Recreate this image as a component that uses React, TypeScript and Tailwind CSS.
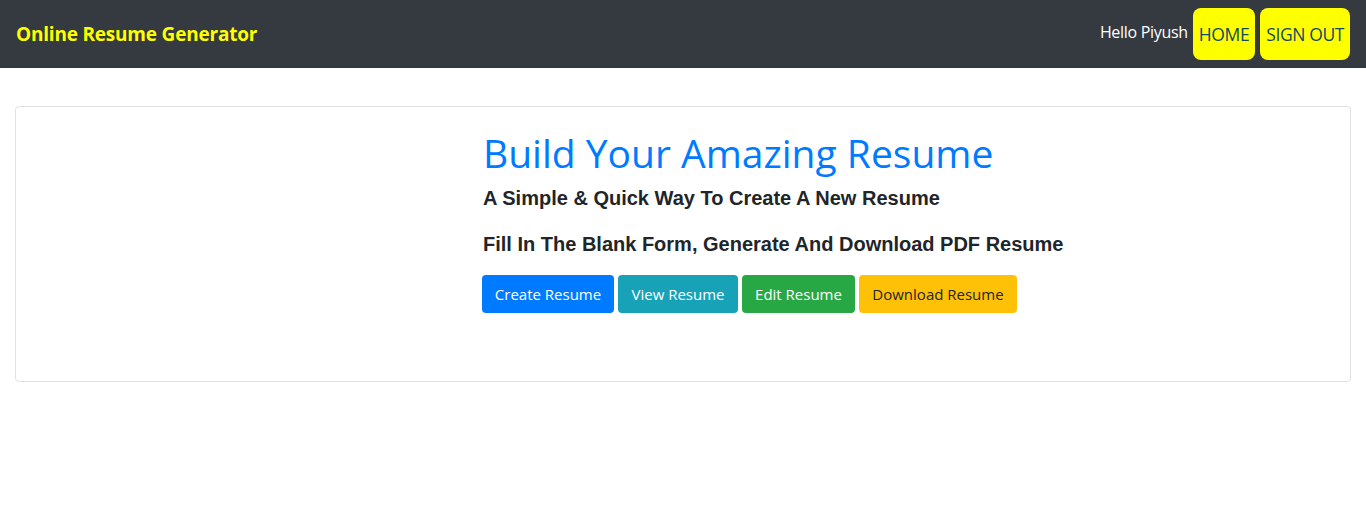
import React from 'react';

const sans = { fontFamily: '"Open Sans", "Noto Sans", sans-serif' };
const arial = { fontFamily: '"Liberation Sans", Arial, sans-serif' };

export default function App() {
  return (
    <div className="min-h-[520px] bg-white text-[#212529]" style={sans}>
      {/* Navbar */}
      <nav className="flex h-[68px] items-center justify-between bg-[#343a40] pl-4 pr-4">
        <span className="text-[19px] font-bold tracking-[-0.2px] text-[#ffff00]">Online Resume Generator</span>
        <div className="flex items-center">
          <span className="mr-[5px] mb-[4px] text-[16px] tracking-[-0.3px] text-white">Hello Piyush</span>
          <button className="mr-[5px] h-[52px] rounded-[8px] bg-[#ffff00] px-[6px] text-[17.5px] tracking-[-0.4px] text-[#124a66]">HOME</button>
          <button className="h-[52px] rounded-[8px] bg-[#ffff00] px-[6px] text-[17.5px] tracking-[-0.4px] text-[#124a66]">SIGN OUT</button>
        </div>
      </nav>

      {/* Hero card */}
      <div className="mx-[15px] mt-[38px] h-[276px] rounded-[4px] border border-[#dfe1e4] pl-[467px] pt-[23px]">
        <h1 className="text-[39px] leading-[1.2] text-[#007bff]">Build Your Amazing Resume</h1>
        <h5 className="mt-[9px] text-[20px] font-bold leading-[24px]" style={arial}>
          A Simple &amp; Quick Way To Create A New Resume
        </h5>
        <h5 className="mt-[22px] text-[20px] font-bold leading-[24px]" style={arial}>
          Fill In The Blank Form, Generate And Download PDF Resume
        </h5>
        <div className="mt-[19px] -ml-[1px] flex gap-[4px]">
          <button className="h-[38px] w-[132px] rounded-[4px] bg-[#007bff] text-[15px] text-white">Create Resume</button>
          <button className="h-[38px] w-[120px] rounded-[4px] bg-[#17a2b8] text-[15px] text-white">View Resume</button>
          <button className="h-[38px] w-[113px] rounded-[4px] bg-[#28a745] text-[15px] text-white">Edit Resume</button>
          <button className="h-[38px] w-[158px] rounded-[4px] bg-[#ffc107] text-[15px] text-[#212529]">Download Resume</button>
        </div>
      </div>
    </div>
  );
}
